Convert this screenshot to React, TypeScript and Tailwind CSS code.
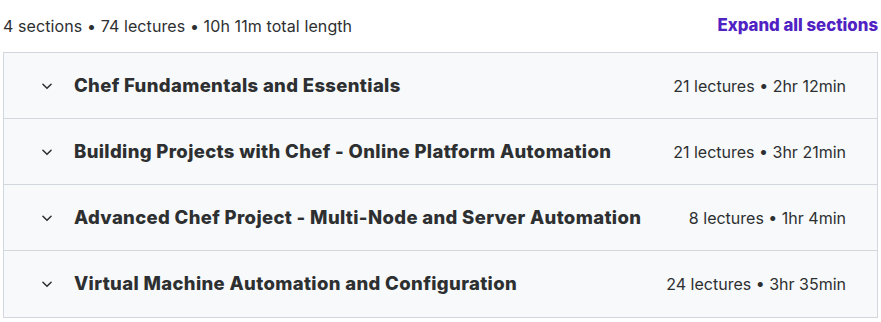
import React from 'react';

interface Section {
  title: string;
  lectures: number;
  length: string;
}

const sections: Section[] = [
  { title: 'Chef Fundamentals and Essentials', lectures: 21, length: '2hr 12min' },
  { title: 'Building Projects with Chef - Online Platform Automation', lectures: 21, length: '3hr 21min' },
  { title: 'Advanced Chef Project - Multi-Node and Server Automation', lectures: 8, length: '1hr 4min' },
  { title: 'Virtual Machine Automation and Configuration', lectures: 24, length: '3hr 35min' },
];

const Chevron: React.FC = () => (
  <svg width="14" height="14" viewBox="0 0 24 24" fill="none" className="shrink-0">
    <path d="M5 9l7 7 7-7" stroke="#2d2f31" strokeWidth="2.6" strokeLinecap="round" strokeLinejoin="round" />
  </svg>
);

const SectionRow: React.FC<{ data: Section; last: boolean }> = ({ data, last }) => (
  <div
    className={`flex items-center h-[66px] pl-[36px] pr-[31px] bg-[#f7f9fa] ${last ? '' : 'border-b border-[#d1d7dc]'}`}
  >
    <Chevron />
    <span className="ml-[20px] flex-1 text-[18.5px] font-extrabold text-[#2d2f31] tracking-[0.35px]">{data.title}</span>
    <span className="text-[16px] text-[#2d2f31]">
      {data.lectures} lectures • {data.length}
    </span>
  </div>
);

export default function App() {
  return (
    <div className="w-[881px] h-[322px] bg-white pl-[3px] pr-[3px] font-['Inter',sans-serif]">
      <div className="flex items-center justify-between h-[52px] pb-[1px]">
        <span className="text-[16px] text-[#2d2f31] tracking-[0.1px]">4 sections • 74 lectures • 10h 11m total length</span>
        <span className="text-[16.8px] font-extrabold text-[#5022c3]">Expand all sections</span>
      </div>
      <div className="border border-[#d1d7dc]">
        {sections.map((s, i) => (
          <SectionRow key={s.title} data={s} last={i === sections.length - 1} />
        ))}
      </div>
    </div>
  );
}
